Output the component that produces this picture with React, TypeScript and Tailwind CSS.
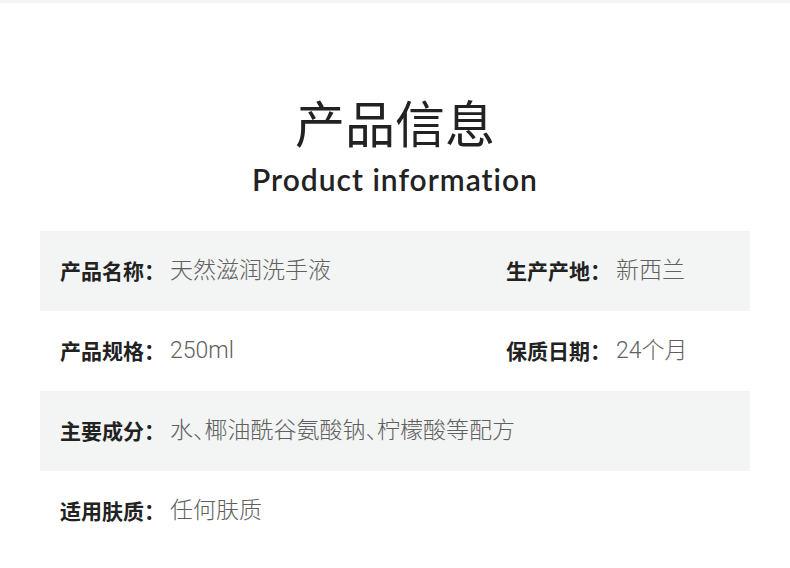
import React from "react";

const rows: { bg: boolean; items: { label: string; value: string }[] }[] = [
  { bg: true, items: [{ label: "产品名称", value: "天然滋润洗手液" }, { label: "生产产地", value: "新西兰" }] },
  { bg: false, items: [{ label: "产品规格", value: "250ml" }, { label: "保质日期", value: "24个月" }] },
  { bg: true, items: [{ label: "主要成分", value: "水、椰油酰谷氨酸钠、柠檬酸等配方" }] },
  { bg: false, items: [{ label: "适用肤质", value: "任何肤质" }] },
];

function Item({ label, value }: { label: string; value: string }) {
  return (
    <div className="flex items-center whitespace-nowrap">
      <span className="text-[21px] font-bold text-[#222]">{label}：</span>
      <span
        className="ml-[5px] text-[23px] font-light text-[#606060] [font-feature-settings:'halt']"
        style={{ fontFamily: 'Roboto, "Noto Sans CJK SC", sans-serif' }}
      >
        {value}
      </span>
    </div>
  );
}

export default function App() {
  return (
    <div
      className="w-[790px] h-[568px] bg-white overflow-hidden"
      style={{ fontFamily: '"Lato", "Noto Sans CJK SC", sans-serif' }}
    >
      <div className="h-[3px] bg-[#f3f5f4]" />
      <div className="flex flex-col items-center pt-[89px]">
        <h1 className="text-[50px] leading-[64px] font-normal text-[#222]">产品信息</h1>
        <p className="mt-[4px] text-[30px] leading-[38px] font-semibold text-[#222] tracking-[1px] [font-variant-ligatures:none]">
          Product information
        </p>
      </div>
      <div className="mx-[40px] mt-[33px] flex flex-col">
        {rows.map((r, i) => (
          <div
            key={i}
            className={`h-[80px] flex items-center pl-[20px] ${r.bg ? "bg-[#f3f4f4]" : "bg-white"}`}
          >
            <div className="w-[446px]">
              <Item {...r.items[0]} />
            </div>
            {r.items[1] && <Item {...r.items[1]} />}
          </div>
        ))}
      </div>
    </div>
  );
}
